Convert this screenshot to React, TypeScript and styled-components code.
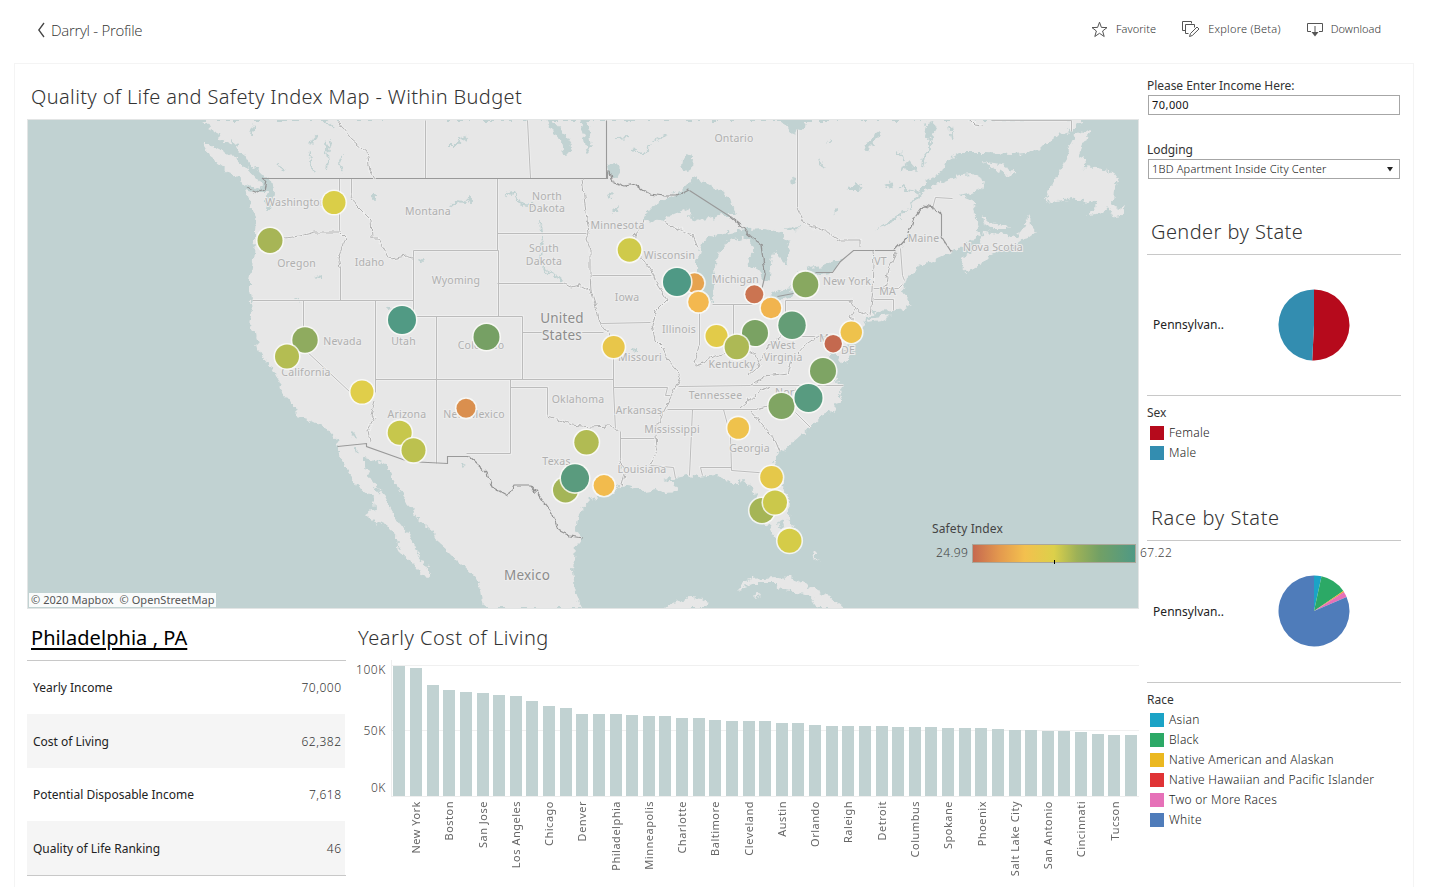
import React from "react";
import styled, { createGlobalStyle } from "styled-components";

const GlobalStyle = createGlobalStyle`
  *, *::before, *::after { box-sizing: border-box; }
  html, body { margin: 0; height: 100%; overflow: hidden; background: #fff; }
  body { font-family: "Noto Sans", "Open Sans", sans-serif; color: #333; }
`;

const Page = styled.div`
  display: flex;
  flex-direction: column;
  width: 1429px;
  height: 887px;
  overflow: hidden;
`;

const Header = styled.header`
  display: flex;
  flex: none;
  justify-content: space-between;
  height: 63px;
  padding: 0 48px 4px 37px;
  align-items: center;
`;

const BackLink = styled.a`
  display: flex;
  align-items: center;
  gap: 5px;
  font: 300 15px/20px "Open Sans", sans-serif;
  letter-spacing: -0.3px;
  color: #333;
  svg { margin-top: 1px; }
`;

const Actions = styled.nav`
  display: flex;
  padding-bottom: 2px;
`;

const Action = styled.button<{ $gap: number; $space: number; $track: number }>`
  display: flex;
  align-items: center;
  gap: ${(p) => p.$gap}px;
  margin: 0 0 0 ${(p) => p.$space}px;
  padding: 0;
  border: 0;
  background: none;
  color: #333;
  font: 300 11px/16px "Noto Sans", sans-serif;
  letter-spacing: ${(p) => p.$track}px;
  svg { margin-top: 1px; }
`;

const Board = styled.main`
  display: flex;
  flex: 1;
  gap: 8px;
  width: 1400px;
  margin-left: 14px;
  padding: 0 12px;
  border: 1px solid #f4f4f4;
  border-bottom: 0;
`;

const MainColumn = styled.div`
  width: 1112px;
`;

const SideColumn = styled.aside`
  width: 254px;
`;

const Title = styled.h2<{ $height: number; $top: number; $indent: number; $track: number }>`
  height: ${(p) => p.$height}px;
  margin: 0;
  padding: ${(p) => p.$top}px 0 0 ${(p) => p.$indent}px;
  font: 300 20px/26px "Noto Sans", sans-serif;
  letter-spacing: ${(p) => p.$track}px;
  white-space: nowrap;
  color: #333;
`;

const MapPanel = styled.section`
  position: relative;
  width: 1112px;
  height: 490px;
  border: 1px solid #e3e5e5;
  background: #c1d2d2;
  svg { display: block; }
`;

const Attribution = styled.div`
  position: absolute;
  left: 1px;
  bottom: 1px;
  width: 187px;
  height: 14px;
  padding-left: 2px;
  background: rgba(255, 255, 255, 0.9);
  font: 400 11px/14px "Noto Sans", sans-serif;
  letter-spacing: 0.06px;
  white-space: pre;
  color: #555;
`;

const SafetyLegend = styled.div`
  position: absolute;
  left: 904px;
  top: 400px;
  width: 242px;
  color: #444;
`;

const LegendTitle = styled.div`
  font: 400 12px/18px "Noto Sans", sans-serif;
  letter-spacing: 0.12px;
`;

const Scale = styled.div`
  display: flex;
  align-items: center;
  height: 19px;
  margin-top: 6px;
  padding-left: 4px;
  gap: 4px;
  font: 300 12px/16px "Noto Sans", sans-serif;
  letter-spacing: 0.35px;
  span { flex: none; width: 32px; padding-bottom: 2px; }
`;

const Ramp = styled.div`
  display: flex;
  align-items: flex-end;
  justify-content: center;
  flex: none;
  width: 164px;
  height: 19px;
  padding-left: 1px;
  border: 1px solid #aaa79a;
  background: linear-gradient(90deg, #c6694f 0, #e3984e 16%, #f3c04e 32%, #dcd04a 50%, #9db157 64%, #72a065 78%, #4f9985 100%);
  &::after { content: ""; width: 1px; height: 4px; margin-bottom: -2px; background: #000; }
`;

const Lower = styled.div`
  display: flex;
`;

const City = styled.section`
  width: 319px;
`;

const CityTitle = styled.h2`
  height: 52px;
  margin: 0;
  padding: 16px 0 0 4px;
  border-bottom: 1px solid #c8c8c8;
  font: 400 20px/26px "Noto Sans", sans-serif;
  letter-spacing: 0.05px;
  text-decoration: underline;
  text-decoration-thickness: 2px;
  text-underline-offset: 3px;
  color: #000;
`;

const Rows = styled.div`
  display: grid;
  grid-template-rows: 53px 54px 53px 54px;
  height: 215px;
  border-bottom: 1px solid #c8c8c8;
`;

const Row = styled.div<{ $band?: boolean }>`
  display: flex;
  justify-content: space-between;
  align-items: center;
  margin-right: 1px;
  padding: 1px 4px 0 6px;
  background: ${(p) => (p.$band ? "#f5f5f5" : "#fff")};
  font: 400 12px/18px "Noto Sans", sans-serif;
  color: #222;
`;

const Value = styled.span`
  font-weight: 300;
  letter-spacing: 0.5px;
  margin-right: -0.5px;
  color: #333;
`;

const CostPanel = styled.section`
  flex: 1;
  padding-left: 7px;
`;

const Chart = styled.div`
  display: flex;
`;

const Axis = styled.div`
  display: flex;
  flex-direction: column;
  align-items: flex-end;
  width: 38px;
  padding: 2px 5px 0 0;
  font: 300 12px/16px "Noto Sans", sans-serif;
  letter-spacing: 0.6px;
  color: #444;
  span:nth-child(2) { margin-top: 45px; }
  span:nth-child(3) { margin-top: 41px; }
`;

const Plot = styled.div`
  width: 748px;
`;

const Bars = styled.div`
  display: grid;
  grid-template-columns: repeat(45, 16.636px);
  align-items: end;
  height: 137px;
  padding-bottom: 1px;
  border-left: 1px solid #eeeeee;
  background:
    linear-gradient(#f0f0f0, #f0f0f0) 0 5px / 100% 1px no-repeat,
    linear-gradient(#f0f0f0, #f0f0f0) 0 70px / 100% 1px no-repeat,
    linear-gradient(#eeeeee, #eeeeee) 0 136px / 100% 1px no-repeat;
`;

const Bar = styled.div<{ $value: number }>`
  width: 12px;
  height: ${(p) => p.$value}px;
  margin-left: 1.4px;
  background: #c1d2d2;
`;

const Names = styled.div`
  display: grid;
  grid-template-columns: repeat(22, 33.27px);
  align-items: start;
  padding-left: 16px;
  padding-top: 4px;
`;

const Name = styled.span`
  justify-self: start;
  writing-mode: vertical-rl;
  transform: rotate(180deg);
  font: 400 11px/17px "Noto Sans", sans-serif;
  letter-spacing: 0.5px;
  white-space: nowrap;
  color: #666;
`;

const Field = styled.label<{ $top: number }>`
  display: block;
  padding-top: ${(p) => p.$top}px;
  font: 400 12px/18px "Noto Sans", sans-serif;
  letter-spacing: -0.05px;
  color: #333;
`;

const Control = styled.div<{ $light?: boolean }>`
  display: flex;
  align-items: center;
  justify-content: space-between;
  width: 252px;
  height: 20px;
  margin-left: 1px;
  padding: 0 5px 0 3px;
  border: 1px solid #a6a6a6;
  font: ${(p) => (p.$light ? 300 : 400)} 11px/16px "Noto Sans", sans-serif;
  letter-spacing: ${(p) => (p.$light ? 0.2 : 0.45)}px;
  color: #111;
`;

const PiePanel = styled.div<{ $height: number }>`
  display: flex;
  align-items: center;
  height: ${(p) => p.$height}px;
  padding: 0 0 1px 6px;
  border: solid #c8c8c8;
  border-width: 1px 0;
  font: 400 12px/18px "Noto Sans", sans-serif;
  letter-spacing: 0.05px;
  color: #222;
  span { width: 124.5px; padding-top: 1px; }
`;

const Legend = styled.div<{ $height: number }>`
  height: ${(p) => p.$height}px;
  padding-top: 8px;
  font: 400 12px/18px "Noto Sans", sans-serif;
  color: #333;
`;

const LegendItem = styled.div<{ $color: string }>`
  display: flex;
  align-items: center;
  gap: 5px;
  height: 20px;
  margin-left: 3px;
  font-weight: 300;
  letter-spacing: 0.27px;
  color: #222;
  &::before { content: ""; width: 14px; height: 14px; background: ${(p) => p.$color}; }
`;

const LegendHead = styled.div`
  height: 19px;
  line-height: 18px;
`;

const MapLabel = styled.text<{ $big?: boolean }>`
  font: ${(p) => (p.$big ? "400 13.5px" : "400 10.5px")} "Noto Sans", sans-serif;
  letter-spacing: 0.2px;
  text-anchor: middle;
  fill: ${(p) => (p.$big ? "#8c8c8c" : "#b0b0b0")};
  stroke: #ececec;
  stroke-width: 2px;
  paint-order: stroke;
`;

const mainland =
  "205,120 209,128 217,132 221,141 231,145 234,138 238,149 246,156 251,166 257,168 261,174 267,178 272,182 275,194 272,206 265,211 266,201 268,192 262,192 254,192 246,190 250,202 253,214 256,220 255,230 255,240 254,254 252,266 249,280 249,290 251,300 252,316 250,326 256,334 258,348 264,358 270,365 274,372 278,380 280,388 288,398 295,410 296,416 308,419 320,425 328,430 335,438 337,445 340,455 346,468 352,476 356,485 366,492 374,501 375,510 366,513 375,522 387,525 398,538 400,552 412,563 425,578 431,573 420,558 410,537 397,520 390,508 385,497 377,488 370,478 365,467 365,457 375,460 387,465 390,473 397,487 407,503 413,510 420,520 435,533 433,538 447,550 460,563 478,580 480,590 483,608 582,608 575,590 573,570 575,547 582,538 575,530 577,518 582,509 590,500 603,496 613,493 620,485 633,487 645,491 657,489 665,492 677,491 673,483 665,480 677,477 687,475 700,477 717,475 727,480 733,485 742,480 748,483 755,492 757,500 758,515 768,525 775,537 780,547 793,552 798,546 797,533 788,517 789,500 783,487 780,473 776,467 775,460 780,452 793,442 810,427 823,415 835,410 832,405 842,402 838,392 843,386 833,378 836,370 831,360 828,350 835,346 840,364 846,362 852,351 848,342 858,335 863,328 865,320 875,311 893,310 903,308 912,304 907,298 902,291 905,285 907,278 917,268 933,261 950,253 963,246 980,236 978,228 975,218 973,208 977,203 960,196 982,190 984,181 973,174 960,175 947,180 933,186 923,193 913,205 903,215 887,225 875,231 890,220 907,210 917,195 927,181 943,171 948,160 960,153 987,153 1013,154 1037,152 1043,146 1057,135 1070,131 1085,120";

const islands = [
  "202,144 210,144 222,150 235,157 247,168 256,178 262,186 256,189 245,184 232,174 220,165 208,155",
  "983,231 1000,233 1020,238 1022,242 1008,247 990,255 982,263 968,273 961,267 963,258 972,250 981,243",
  "1018,240 1021,230 1030,214 1031,225 1036,232 1028,238",
  "983,216 990,223 1005,226 1008,229 995,229 986,225",
  "982,161 1000,164 1009,169 1015,174 1005,175 993,168",
  "1091,130 1077,133 1068,151 1063,168 1053,181 1045,200 1053,202 1073,198 1088,203 1098,199 1096,208 1087,215 1102,213 1108,206 1114,218 1122,217 1125,205 1118,210 1113,203 1114,190 1119,180 1113,171 1097,168 1082,167 1086,157 1077,160 1084,144",
  "866,321 875,317 892,315 880,321 868,323",
  "737,590 745,582 753,579 775,577 790,578 806,584 817,590 830,598 843,608 818,608 810,597 795,592 782,591 776,583 755,583",
  "665,608 672,603 690,598 703,599 708,602 706,608",
  "752,596 758,593 760,596 755,599",
  "813,553 816,550 816,559 820,561 815,560",
];

const lakes = [
  "643,220 653,206 667,198 683,190 693,178 707,183 720,190 730,198 735,215 723,215 700,221 688,217 690,208 673,215 660,221",
  "736,231 713,235 702,244 697,261 697,284 708,301 713,300 716,282 715,265 720,251 728,241 744,236",
  "736,231 750,241 754,252 746,264 755,267 761,275 764,283 770,278 771,262 774,252 786,264 790,250 784,234 765,228 748,229",
  "764,299 774,292 790,288 800,285 796,293 784,298 775,304 768,306",
  "797,273 810,268 823,266 842,258 836,268 829,273 810,276",
  "780,120 806,120 805,128 798,129 794,135 789,127",
  "545,120 552,120 563,132 572,146 571,153 564,154 561,142 552,130",
  "580,120 586,120 590,132 592,148 587,153 584,137",
  "682,158 686,153 693,157 692,169 686,171 681,166",
  "608,166 616,164 622,170 617,177 610,176",
  "605,196 613,192 612,197 607,199",
  "612,212 619,205 618,212",
  "864,149 867,141 880,132 882,134 873,143 868,152",
  "848,188 855,183 863,188 859,191 850,191",
  "924,124 932,122 936,130 930,139 924,134 926,127",
  "903,167 909,162 917,171 908,170",
  "885,184 890,182 893,187 888,189",
  "789,178 795,180 796,184 790,183",
  "786,227 800,226 798,229 788,230",
  "833,206 836,209 834,215",
  "351,430 356,435 357,438 352,436",
  "353,446 358,450 359,453 355,451",
  "372,196 375,194 375,201 371,199",
  "388,306 392,305 391,311 387,310",
  "418,257 422,259 423,262 419,261",
  "296,298 299,300 298,304",
  "315,278 320,276 320,280",
  "779,523 783,521 784,526 780,527",
  "461,463 465,465 463,468",
];

const streams = [
  "313,170 309,162 311,150", "327,170 328,160 325,143 329,150 331,142", "343,171 339,162 342,155",
  "311,144 317,136 313,140", "252,137 253,128 250,132", "279,163 283,170", "325,120 333,128",
  "450,145 458,145 464,137 463,134 468,139", "450,207 456,202 466,203 471,197 471,204",
  "506,195 513,193 519,203 531,206 536,203", "540,221 541,233 543,242 540,256 545,270 556,276 563,282",
  "618,138 628,137", "652,142 668,135", "632,149 643,154 650,146", "900,188 913,190 919,193",
  "902,171 905,164", "930,139 930,150 924,158 922,168", "898,150 902,160", "950,125 952,140",
  "820,160 824,168", "828,143 832,139", "631,349 637,350", "618,464 622,468",
];

const borders = [
  "339,178 339,232", "340,266 340,300", "252,300 413,300", "351,178 351,195",
  "413,250 498,250 498,316 413,316 413,250", "303,300 303,348 350,392", "375,300 375,392",
  "375,379 613,379", "436,316 436,463", "413,316 522,316 522,379", "510,379 510,453 466,453",
  "510,387 547,387 547,416", "620,431 620,460", "613,358 613,387 615,430", "613,387 667,387 665,395 672,395",
  "522,332 603,332", "497,178 497,250", "497,233 589,233", "497,283 565,283",
  "590,275 654,275", "600,323 650,322", "650,465 673,467 675,478", "620,438 656,438", "699,312 699,345",
  "733,304 733,345", "712,304 752,304", "678,386 750,385 843,385",
  "667,409 757,409", "692,409 689,475", "723,409 730,435 731,470 770,473", "731,467 700,467 702,475",
  "785,315 785,300 850,300", "785,336 840,336 842,350 850,351", "795,412 810,427",
  "873,288 898,288 902,284", "871,299 893,299 893,310", "900,248 902,275 904,280", "797,129 797,207",
  "425,120 425,178", "527,120 530,178", "991,120 1071,120 1071,131", "932,208 935,197 952,198",
];

const riverBorders = [
  "339,232 345,238 338,258 340,268", "285,238 300,236 315,232 340,232",
  "351,195 356,205 371,220 372,238 378,238 390,259 406,256 413,258", "375,402 371,415 374,420 368,430 370,442",
  "547,416 560,420 572,425 590,427 610,426 620,431", "620,460 625,475 622,485", "565,283 572,287 580,285 591,291",
  "582,178 585,205 589,233 586,240 590,250 590,275 591,291 597,310 600,323 608,333 614,348",
  "644,219 642,228 635,236 634,250 645,262 654,275 656,283 667,300 657,310 652,325 655,340 663,348 668,360 677,370 680,380 672,395 663,412 658,425 656,435 657,448 650,465",
  "699,345 694,362 698,365 705,362 715,356 730,352 745,348 755,355 760,366 748,376",
  "665,222 680,230 693,235 698,247", "751,411 762,425 775,440 780,452", "757,409 770,405 795,412",
  "740,408 755,395 770,387", "752,384 765,376 788,373 792,360 805,345 818,336", "760,360 770,345 783,335 785,315",
  "850,300 855,308 868,316", "855,308 850,318 862,328", "873,250 874,265 873,290 870,315", "896,252 889,268 885,288",
  "797,207 805,224 828,232 840,240 860,240 860,246", "337,120 352,140 367,152 370,170 375,178", "970,120 975,125 982,126",
];

const nationBorders = [
  "262,178 607,178 607,171", "689,190 731,217", "765,273 761,290",
  "777,296 793,293", "815,272 832,272 840,261 853,250 895,250", "941,213 941,236",
  "337,446 366,443 366,446 408,461 447,463 447,456 468,456", "606,120 606,178",
];

const riverNationBorders = [
  "245,187 258,192 264,190 266,181 262,178", "607,171 610,171 613,182 625,186 635,184 643,190 650,194 665,196 677,196 689,190",
  "731,217 742,226 748,235 761,244 765,273", "895,250 908,236 913,220 923,206 935,208 941,213", "941,236 952,253",
  "468,456 487,473 492,487 508,496 514,485 530,485 540,497 553,515 558,530 570,536 582,538",
];

type LabelSpec = [string, number, number];
const labels: LabelSpec[] = [
  ["Washington", 296, 206], ["Oregon", 296.5, 267], ["Idaho", 369.5, 266], ["Montana", 428, 215],
  ["North", 547, 200], ["Dakota", 547, 212], ["South", 544, 252], ["Dakota", 544, 265], ["Wyoming", 456, 284],
  ["Nevada", 342.5, 345], ["Utah", 403.5, 345], ["Colorado", 481, 349], ["California", 306, 376],
  ["Arizona", 407, 417.5], ["New Mexico", 474, 417.5], ["Oklahoma", 578, 403], ["Texas", 556.5, 465],
  ["Minnesota", 617.5, 228.5], ["Wisconsin", 669.5, 259], ["Iowa", 627, 301], ["Illinois", 679, 333],
  ["Missouri", 640, 361], ["Michigan", 735.5, 283], ["Kentucky", 732, 368], ["Tennessee", 715.5, 399],
  ["Arkansas", 639, 414], ["Mississippi", 672, 432.5], ["Louisiana", 642, 473], ["Georgia", 749.5, 452],
  ["West", 783, 349], ["Virginia", 783, 361], ["North", 790, 396], ["MD", 828, 342], ["DE", 848, 354], ["New York", 847, 284.5],
  ["VT", 880.5, 265], ["MA", 887.5, 295], ["Maine", 923.5, 241.5], ["Nova Scotia", 993, 250.5], ["Ontario", 734, 141.5],
];

type Marker = [number, number, number, string];
const markers: Marker[] = [
  [334, 202.5, 11.5, "#dace48"], [270, 240.5, 12.5, "#a7b556"], [305, 340, 12.7, "#8fab5f"], [287, 356.5, 12, "#b4bd52"],
  [402, 320, 14, "#519a84"], [486.5, 337, 13, "#76a064"], [362, 392, 11.5, "#e0ce4a"], [399.7, 432.7, 12, "#c7c74c"],
  [413.5, 450.3, 12, "#bcc14f"], [466, 408.3, 9.5, "#da8f4e"], [629.5, 250, 11.8, "#cfca4a"], [694.5, 283, 9.7, "#e6a34f"],
  [677, 282, 14, "#4f9985"], [698.5, 302, 10.3, "#f3b84f"], [613.7, 347, 11, "#e8c64a"], [754.3, 294.3, 9, "#cb7451"],
  [771, 308, 10.2, "#f1b44e"], [805.5, 284.5, 12.8, "#88a860"], [792, 325.3, 13.7, "#649d76"], [716.5, 336, 11, "#e2cb49"],
  [755, 333, 13, "#7aa263"], [736.8, 347, 12.2, "#adb955"], [851.3, 332.3, 10.7, "#eec24c"], [833.2, 343.7, 8.7, "#c4694f"],
  [823, 371, 13, "#7ea464"], [781.5, 406, 13, "#80a563"], [808.5, 398, 14, "#589b80"], [738.2, 428, 10.8, "#efc24c"],
  [586.5, 442.3, 12.2, "#b1bb53"], [565.5, 490, 12.5, "#a4b557"], [575, 478.3, 14, "#5a9b7e"], [604, 485.5, 10.4, "#f2bb4d"],
  [771.5, 477.3, 11.3, "#e5c84a"], [762, 510.5, 12.5, "#a5b556"], [775, 502.5, 12, "#cbc84b"], [789.5, 540.7, 12, "#d5cc48"],
];

const costs = [
  130, 128, 111, 106, 104, 103, 101, 100, 95, 90, 88, 82, 82, 82, 81, 80, 80, 78, 78, 76, 75, 75, 75, 73, 73, 71, 70, 70,
  70, 70, 69, 69, 69, 68, 68, 68, 67, 66, 66, 65, 65, 64, 62, 61, 61,
];

const cities = [
  "New York", "Boston", "San Jose", "Los Angeles", "Chicago", "Denver", "Philadelphia", "Minneapolis", "Charlotte",
  "Baltimore", "Cleveland", "Austin", "Orlando", "Raleigh", "Detroit", "Columbus", "Spokane", "Phoenix",
  "Salt Lake City", "San Antonio", "Cincinnati", "Tucson",
];

const races: [string, string][] = [
  ["Asian", "#1ba3c6"], ["Black", "#2ca966"], ["Native American and Alaskan", "#ebb820"],
  ["Native Hawaiian and Pacific Islander", "#e03335"], ["Two or More Races", "#e671b8"], ["White", "#4f7cba"],
];

const lines = (list: string[]) => list.map((p) => <polyline key={p} points={p} />);

function UsMap() {
  return (
    <svg width="1110" height="488" viewBox="28 120 1110 488">
      <defs>
        <filter id="coast" x="0" y="0" width="1" height="1" colorInterpolationFilters="sRGB">
          <feTurbulence type="fractalNoise" baseFrequency="0.16" numOctaves="3" seed="4" />
          <feDisplacementMap in="SourceGraphic" scale="9" xChannelSelector="R" yChannelSelector="G" />
        </filter>
        <filter id="river" filterUnits="userSpaceOnUse" x="28" y="120" width="1110" height="488" colorInterpolationFilters="sRGB">
          <feTurbulence type="fractalNoise" baseFrequency="0.14" numOctaves="2" seed="9" />
          <feDisplacementMap in="SourceGraphic" scale="6" xChannelSelector="R" yChannelSelector="G" />
        </filter>
      </defs>
      <g filter="url(#coast)">
        <rect x="28" y="120" width="1110" height="488" fill="#c1d2d2" />
        <g fill="#e7e7e7">
          <polygon points={mainland} />
          {islands.map((p) => <polygon key={p} points={p} />)}
        </g>
        <g fill="#c1d2d2">{lakes.map((p) => <polygon key={p} points={p} />)}</g>
        <g fill="none" stroke="#c1d2d2" strokeWidth="1.8">{lines(streams)}</g>
      </g>
      <g fill="none" transform="translate(0.5 0.5)">
        <g stroke="#f0f0f0" strokeWidth="2.6">{lines(borders)}</g>
        <g stroke="#bcbcbc" strokeWidth="1">{lines(borders)}</g>
        <g stroke="#999" strokeWidth="1.1">{lines(nationBorders)}</g>
      </g>
      <g fill="none" filter="url(#river)" strokeLinejoin="round">
        <g stroke="#f0f0f0" strokeWidth="2.6">{lines(riverBorders)}</g>
        <g stroke="#b2b2b2" strokeWidth="1">{lines(riverBorders)}</g>
        <g stroke="#929292" strokeWidth="1.2">{lines(riverNationBorders)}</g>
      </g>
      {labels.map(([t, x, y]) => <MapLabel key={t + x + y} x={x} y={y}>{t}</MapLabel>)}
      <MapLabel $big x="562" y="323">United</MapLabel>
      <MapLabel $big x="562" y="340">States</MapLabel>
      <MapLabel $big x="527" y="579.5">Mexico</MapLabel>
      {markers.map(([x, y, r, c]) => (
        <g key={x}>
          <circle cx={x} cy={y} r={r + 1.6} fill="#fafaf7" fillOpacity="0.85" />
          <circle cx={x} cy={y} r={r} fill={c} />
        </g>
      ))}
    </svg>
  );
}

function Pie({ slices }: { slices: [number, string][] }) {
  let start = 0;
  const point = (f: number) => `${36 + 35.5 * Math.sin(f * 2 * Math.PI)},${36 - 35.5 * Math.cos(f * 2 * Math.PI)}`;
  return (
    <svg width="72" height="72" viewBox="0 0 72 72">
      {slices.map(([size, color]) => {
        const from = start;
        start += size;
        return <path key={color} fill={color} d={`M36,36 L${point(from)} A35.5,35.5 0 ${size > 0.5 ? 1 : 0} 1 ${point(start)} Z`} />;
      })}
    </svg>
  );
}

export default function App() {
  return (
    <Page>
      <GlobalStyle />
      <Header>
        <BackLink>
          <svg width="9" height="16" viewBox="0 0 9 16" fill="none" stroke="#444" strokeWidth="1.3"><path d="M7 1 1.8 8 7 15" /></svg>
          Darryl - Profile
        </BackLink>
        <Actions>
          <Action $gap={8} $space={0} $track={0.05}>
            <svg width="17" height="17" viewBox="0 0 17 17" fill="none" stroke="#555" strokeWidth="1"><path d="M8.5 1.2 10.4 6.4 16 6.6 11.6 10 13.2 15.5 8.5 12.3 3.8 15.5 5.4 10 1 6.6 6.6 6.4Z" /></svg>
            Favorite
          </Action>
          <Action $gap={8} $space={26} $track={0.25}>
            <svg width="18" height="17" viewBox="0 0 18 17" fill="none" stroke="#555" strokeWidth="1">
              <path d="M3.5 9.5H.5V.5H9.5V2.5M6.5 12.5H3.5V3.5H12.5V6.5M7.5 15.5 8.5 12.5 15 6 17 8 10.3 14.5Z" />
            </svg>
            Explore (Beta)
          </Action>
          <Action $gap={7} $space={25} $track={0}>
            <svg width="18" height="17" viewBox="0 0 18 17" fill="none" stroke="#555" strokeWidth="1">
              <path d="M5 10.5H1.5V2.5H16.5V10.5H13M9 5V12" /><path d="M5.5 11H12.5L9 15.5Z" fill="#555" stroke="none" />
            </svg>
            Download
          </Action>
        </Actions>
      </Header>
      <Board>
        <MainColumn>
          <Title $height={55} $top={20} $indent={4} $track={0.37}>Quality of Life and Safety Index Map - Within Budget</Title>
          <MapPanel>
            <UsMap />
            <Attribution>{"© 2020 Mapbox  © OpenStreetMap"}</Attribution>
            <SafetyLegend>
              <LegendTitle>Safety Index</LegendTitle>
              <Scale><span>24.99</span><Ramp /><span>67.22</span></Scale>
            </SafetyLegend>
          </MapPanel>
          <Lower>
            <City>
              <CityTitle>Philadelphia , PA</CityTitle>
              <Rows>
                <Row>Yearly Income<Value>70,000</Value></Row>
                <Row $band>Cost of Living<Value>62,382</Value></Row>
                <Row>Potential Disposable Income<Value>7,618</Value></Row>
                <Row $band>Quality of Life Ranking<Value>46</Value></Row>
              </Rows>
            </City>
            <CostPanel>
              <Title $height={51} $top={16} $indent={5} $track={0.5}>Yearly Cost of Living</Title>
              <Chart>
                <Axis><span>100K</span><span>50K</span><span>0K</span></Axis>
                <Plot>
                  <Bars>{costs.map((v, i) => <Bar key={i} $value={v} />)}</Bars>
                  <Names>{cities.map((c) => <Name key={c}>{c}</Name>)}</Names>
                </Plot>
              </Chart>
            </CostPanel>
          </Lower>
        </MainColumn>
        <SideColumn>
          <Field $top={13}>Please Enter Income Here:<Control>70,000</Control></Field>
          <Field $top={26}>Lodging
            <Control $light>1BD Apartment Inside City Center
              <svg width="8" height="5" viewBox="0 0 8 5"><path d="M1 0H7L4 4.5Z" fill="#222" /></svg>
            </Control>
          </Field>
          <Title $height={75} $top={40} $indent={4} $track={0.42}>Gender by State</Title>
          <PiePanel $height={142}>
            <span>Pennsylvan..</span>
            <Pie slices={[[0.508, "#b60a1c"], [0.492, "#338db0"]]} />
          </PiePanel>
          <Legend $height={105}>
            <LegendHead>Sex</LegendHead>
            <LegendItem $color="#b60a1c">Female</LegendItem>
            <LegendItem $color="#338db0">Male</LegendItem>
          </Legend>
          <Title $height={39} $top={4} $indent={4} $track={0.6}>Race by State</Title>
          <PiePanel $height={143}>
            <span>Pennsylvan..</span>
            <Pie slices={[[0.034, "#1ba3c6"], [0.121, "#2ca966"], [0.004, "#ebb820"], [0.002, "#e03335"], [0.024, "#e671b8"], [0.815, "#4f7cba"]]} />
          </PiePanel>
          <Legend $height={160}>
            <LegendHead>Race</LegendHead>
            {races.map(([n, c]) => <LegendItem key={n} $color={c}>{n}</LegendItem>)}
          </Legend>
        </SideColumn>
      </Board>
    </Page>
  );
}
